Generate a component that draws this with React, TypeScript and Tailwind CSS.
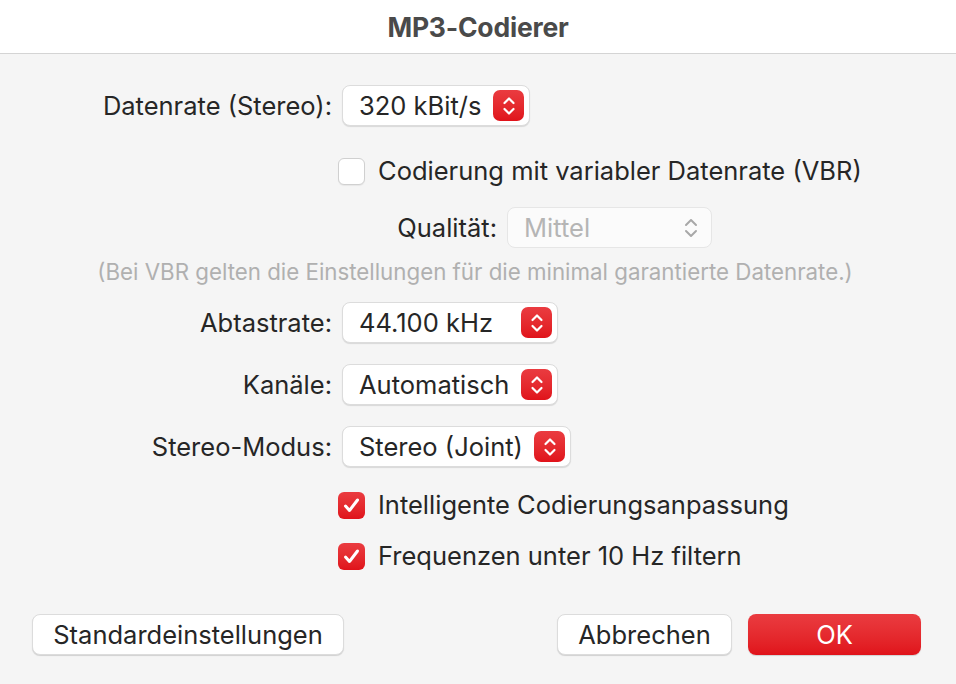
function Stepper({ disabled = false }: { disabled?: boolean }) {
  if (disabled) {
    return (
      <div className="w-[30px] h-[30px] flex items-center justify-center text-[#a8a8a8]">
        <svg width="16" height="22" viewBox="0 0 16 22" fill="none">
          <path d="M3 8 L8 3 L13 8" stroke="currentColor" strokeWidth="2" strokeLinecap="round" strokeLinejoin="round" />
          <path d="M3 14 L8 19 L13 14" stroke="currentColor" strokeWidth="2" strokeLinecap="round" strokeLinejoin="round" />
        </svg>
      </div>
    );
  }
  return (
    <div className="w-[31px] h-[31px] rounded-[7px] bg-gradient-to-b from-[#ea3b40] to-[#e0121a] flex items-center justify-center">
      <svg width="16" height="22" viewBox="0 0 16 22" fill="none">
        <path d="M3.5 8 L8 3.5 L12.5 8" stroke="white" strokeWidth="2.2" strokeLinecap="round" strokeLinejoin="round" />
        <path d="M3.5 14 L8 18.5 L12.5 14" stroke="white" strokeWidth="2.2" strokeLinecap="round" strokeLinejoin="round" />
      </svg>
    </div>
  );
}

function Popup({ value, width, disabled = false }: { value: string; width: string; disabled?: boolean }) {
  return (
    <div
      className={`${width} h-[41px] rounded-[8px] flex items-center justify-between pl-[16px] pr-[5px] ${
        disabled
          ? "bg-[#fbfbfb] border border-[#e6e6e6] text-[#b5b5b5]"
          : "bg-white border border-[#dcdcdc] shadow-[0_1px_1px_rgba(0,0,0,0.12)] text-[#262626]"
      }`}
    >
      <span>{value}</span>
      <Stepper disabled={disabled} />
    </div>
  );
}

function Checkbox({ checked, label }: { checked: boolean; label: string }) {
  return (
    <div className="flex items-center h-[30px] gap-[13px] pl-[338px]">
      {checked ? (
        <div className="w-[27px] h-[27px] rounded-[6px] bg-gradient-to-b from-[#ea3b40] to-[#e0121a] flex items-center justify-center">
          <svg width="19" height="19" viewBox="0 0 19 19" fill="none">
            <path d="M3.5 10 L7.5 14.5 L15.5 4" stroke="white" strokeWidth="3" strokeLinecap="round" strokeLinejoin="round" />
          </svg>
        </div>
      ) : (
        <div className="w-[27px] h-[27px] rounded-[6px] bg-white border border-[#d0d0d0] shadow-[0_1px_1px_rgba(0,0,0,0.06)]" />
      )}
      <span>{label}</span>
    </div>
  );
}

function Row({ label, children, labelWidth = "w-[333px]" }: { label: string; children: React.ReactNode; labelWidth?: string }) {
  return (
    <div className="flex items-center">
      <div className={`${labelWidth} text-right pr-[1px] whitespace-nowrap`}>{label}</div>
      <div className="ml-[9px]">{children}</div>
    </div>
  );
}

export default function App() {
  return (
    <div
      className="w-[956px] h-[684px] bg-[#f5f5f5] flex flex-col text-[25.5px] leading-[30px] text-[#262626]"
      style={{ fontFamily: "Inter, 'Noto Sans', sans-serif" }}
    >
      {/* Title bar */}
      <div className="h-[54px] bg-white border-b border-[#d4d4d4] flex items-center justify-center shrink-0">
        <span className="text-[26.5px] font-bold text-[#4a4a4a] tracking-[-0.2px]">MP3-Codierer</span>
      </div>

      <div className="flex flex-col pt-[31px]">
        <Row label="Datenrate (Stereo):">
          <Popup value="320 kBit/s" width="w-[188px]" />
        </Row>

        <div className="mt-[30px]">
          <Checkbox checked={false} label="Codierung mit variabler Datenrate (VBR)" />
        </div>

        <div className="mt-[21px]">
          <Row label="Qualität:" labelWidth="w-[498px]">
            <Popup value="Mittel" width="w-[205px]" disabled />
          </Row>
        </div>

        <div className="mt-[11px] text-center text-[22.3px] leading-[26px] text-[#b0b0b0] pr-[6px]">
          (Bei VBR gelten die Einstellungen für die minimal garantierte Datenrate.)
        </div>

        <div className="mt-[17px] flex flex-col gap-[21px]">
          <Row label="Abtastrate:">
            <Popup value="44.100 kHz" width="w-[216px]" />
          </Row>
          <Row label="Kanäle:">
            <Popup value="Automatisch" width="w-[216px]" />
          </Row>
          <Row label="Stereo-Modus:">
            <Popup value="Stereo (Joint)" width="w-[229px]" />
          </Row>
        </div>

        <div className="mt-[23px] flex flex-col gap-[21px]">
          <Checkbox checked label="Intelligente Codierungsanpassung" />
          <Checkbox checked label="Frequenzen unter 10 Hz filtern" />
        </div>

        <div className="mt-[43px] flex items-center px-[32px]">
          <button className="w-[312px] h-[41px] rounded-[8px] bg-white border border-[#dcdcdc] shadow-[0_1px_1px_rgba(0,0,0,0.15)] text-[#262626]">
            Standardeinstellungen
          </button>
          <div className="flex-1" />
          <button className="w-[175px] h-[41px] rounded-[8px] bg-white border border-[#dcdcdc] shadow-[0_1px_1px_rgba(0,0,0,0.15)] text-[#262626]">
            Abbrechen
          </button>
          <button className="ml-[16px] mr-[3px] w-[173px] h-[41px] rounded-[8px] bg-gradient-to-b from-[#ea3b40] to-[#e0121a] text-white shadow-[0_1px_1px_rgba(0,0,0,0.15)]">
            OK
          </button>
        </div>
      </div>
    </div>
  );
}
